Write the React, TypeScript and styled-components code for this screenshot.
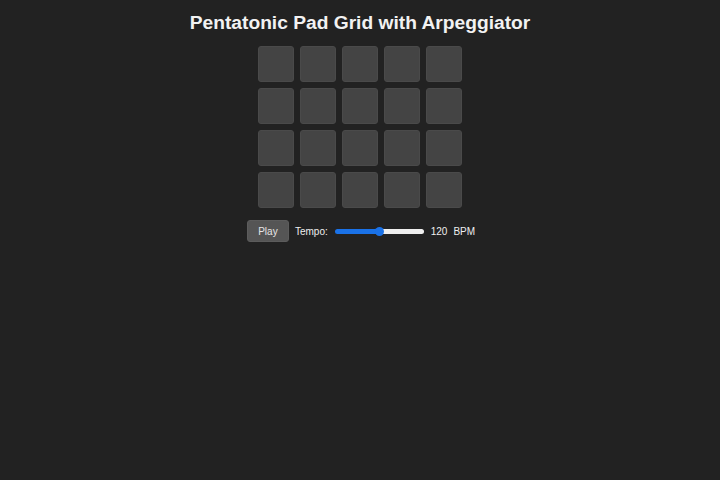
import React, { useState } from "react";
import styled, { createGlobalStyle } from "styled-components";

const GlobalStyle = createGlobalStyle`
  html, body {
    margin: 0;
    padding: 0;
    background: #222222;
    height: 100%;
  }
  body {
    font-family: "Liberation Sans", Arial, sans-serif;
    color: #eeeeee;
  }
`;

const Page = styled.div`
  display: flex;
  flex-direction: column;
  align-items: center;
  min-height: 480px;
  padding-top: 12px;
  box-sizing: border-box;
`;

const Title = styled.h1`
  margin: 0 0 12px;
  font-size: 19.2px;
  line-height: 22px;
  font-weight: bold;
  color: #f2f2f2;
`;

const PadGrid = styled.div`
  display: grid;
  grid-template-columns: repeat(5, 36px);
  grid-auto-rows: 36px;
  gap: 6px;
`;

const Pad = styled.button<{ $active: boolean }>`
  width: 36px;
  height: 36px;
  padding: 0;
  border: 1px solid #4a4a4a;
  border-radius: 3px;
  background: ${(p) => (p.$active ? "#6a8fd8" : "#444444")};
  cursor: pointer;
`;

const Controls = styled.div`
  display: flex;
  align-items: center;
  gap: 6px;
  margin-top: 12px;
  padding-left: 2px;
  font-size: 10px;
  color: #eeeeee;
`;

const PlayButton = styled.button`
  width: 42px;
  height: 22px;
  padding: 0;
  border: 1px solid #5c5c5c;
  border-radius: 3px;
  background: #555555;
  color: #e6e6e6;
  font-family: "Liberation Sans", Arial, sans-serif;
  font-size: 10px;
  cursor: pointer;
`;

const Label = styled.span`
  white-space: nowrap;
`;

const Range = styled.input`
  -webkit-appearance: none;
  appearance: none;
  width: 89px;
  height: 9px;
  margin: 0 1px;
  background: transparent;
  cursor: pointer;

  &::-webkit-slider-runnable-track {
    height: 5px;
    border-radius: 3px;
    background: linear-gradient(
      to right,
      #1a72e8 0%,
      #1a72e8 var(--fill),
      #efefef var(--fill),
      #efefef 100%
    );
  }
  &::-webkit-slider-thumb {
    -webkit-appearance: none;
    width: 9px;
    height: 9px;
    margin-top: -2px;
    border: none;
    border-radius: 50%;
    background: #1a72e8;
  }
`;

const ROWS = 4;
const COLS = 5;

export default function App() {
  const [active, setActive] = useState<boolean[]>(Array(ROWS * COLS).fill(false));
  const [tempo, setTempo] = useState(120);
  const [playing, setPlaying] = useState(false);
  const min = 60;
  const max = 180;
  const fill = ((tempo - min) / (max - min)) * 100;

  return (
    <>
      <GlobalStyle />
      <Page>
        <Title>Pentatonic Pad Grid with Arpeggiator</Title>
        <PadGrid>
          {active.map((on, i) => (
            <Pad
              key={i}
              $active={on}
              onClick={() =>
                setActive((a) => a.map((v, j) => (j === i ? !v : v)))
              }
            />
          ))}
        </PadGrid>
        <Controls>
          <PlayButton onClick={() => setPlaying((p) => !p)}>
            {playing ? "Stop" : "Play"}
          </PlayButton>
          <Label>Tempo:</Label>
          <Range
            type="range"
            min={min}
            max={max}
            value={tempo}
            onChange={(e) => setTempo(Number(e.target.value))}
            style={{ ["--fill" as string]: `${fill}%` } as React.CSSProperties}
          />
          <Label>{tempo}</Label>
          <Label>BPM</Label>
        </Controls>
      </Page>
    </>
  );
}
